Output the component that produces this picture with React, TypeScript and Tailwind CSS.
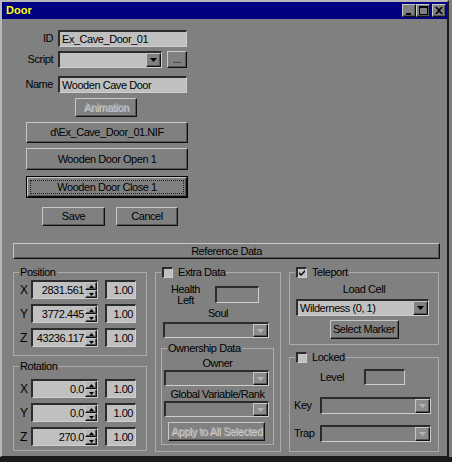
import React from 'react';

const sunken =
  'border-t-2 border-l-2 border-b border-r border-t-[#2c2c2c] border-l-[#2c2c2c] border-b-[#cfcfcf] border-r-[#cfcfcf]';
const raised =
  'border border-t-[#c8c8c8] border-l-[#c8c8c8] border-b-[#101010] border-r-[#101010] shadow-[inset_-1px_-1px_0_#555555]';
const disabledText = 'text-[#a8a8a8] [text-shadow:1px_1px_0_#d6d6d6]';

const Down = ({ c = '#000', w = 7 }: { c?: string; w?: number }) => (
  <svg width={w} height={Math.ceil(w / 2)} viewBox={`0 0 ${w} ${Math.ceil(w / 2)}`}>
    <path d={`M0 0H${w}L${w / 2} ${Math.ceil(w / 2)}Z`} fill={c} />
  </svg>
);

const Up = ({ w = 5 }: { w?: number }) => (
  <svg width={w} height={Math.ceil(w / 2)} viewBox={`0 0 ${w} ${Math.ceil(w / 2)}`}>
    <path d={`M0 ${Math.ceil(w / 2)}H${w}L${w / 2} 0Z`} fill="#000" />
  </svg>
);

const Btn = ({
  className,
  children,
  disabled,
}: {
  className: string;
  children: React.ReactNode;
  disabled?: boolean;
}) => (
  <div
    className={`${raised} bg-[#808080] flex items-center justify-center shrink-0 whitespace-nowrap ${
      disabled ? disabledText : ''
    } ${className}`}
  >
    {children}
  </div>
);

const Edit = ({ className, value, right }: { className: string; value?: string; right?: boolean }) => (
  <div
    className={`${sunken} flex items-center px-[2px] shrink-0 ${right ? 'justify-end' : ''} ${className}`}
  >
    {value}
  </div>
);

const Combo = ({ className, value, enabled }: { className: string; value?: string; enabled?: boolean }) => (
  <div
    className={`${sunken} flex items-stretch shrink-0 ${enabled ? 'bg-[#c0c0c0]' : 'bg-[#808080]'} ${className}`}
  >
    <div className="flex-1 flex items-center px-[2px] whitespace-nowrap overflow-hidden">{value}</div>
    <div
      className={`${raised} w-[15px] flex items-center justify-center ${
        enabled ? 'bg-[#808080]' : 'bg-[#8c8c8c]'
      }`}
    >
      <Down c={enabled ? '#000' : '#b4b4b4'} />
    </div>
  </div>
);

const Spin = ({ value }: { value: string }) => (
  <div className={`${sunken} bg-[#c0c0c0] w-[67px] h-full flex shrink-0`}>
    <div className="flex-1 flex items-center justify-end pr-[1px] whitespace-nowrap">{value}</div>
    <div className="flex flex-col w-[12px]">
      <div className={`${raised} flex-1 bg-[#b4b4b4] flex items-center justify-center`}>
        <Up />
      </div>
      <div className={`${raised} flex-1 bg-[#b4b4b4] flex items-center justify-center`}>
        <Down w={5} />
      </div>
    </div>
  </div>
);

const Check = ({ checked }: { checked?: boolean }) => (
  <span className={`${sunken} inline-flex w-[11px] h-[11px] bg-[#c0c0c0] items-center justify-center`}>
    {checked && (
      <svg width="7" height="7" viewBox="0 0 7 7">
        <path d="M0 2L2 4L6 0V2L2 6L0 4Z" fill="#000" />
      </svg>
    )}
  </span>
);

const Group = ({
  legend,
  className,
  children,
}: {
  legend: React.ReactNode;
  className: string;
  children: React.ReactNode;
}) => (
  <fieldset className={`border border-[#ababab] shrink-0 ${className}`}>
    <legend className="ml-[5px] px-[1px] leading-[13px]">{legend}</legend>
    {children}
  </fieldset>
);

const XyzRows = ({ values, first, gap }: { values: string[]; first: string; gap: string }) => (
  <div className={`flex flex-col ${first} ${gap}`}>
    {['X', 'Y', 'Z'].map((axis, i) => (
      <div key={axis} className="flex items-center h-[19px]">
        <span className="ml-[6px] w-[11px] text-[12px]">{axis}</span>
        <Spin value={values[i]} />
        <Edit className="ml-[7px] w-[31px] h-full bg-[#c0c0c0]" value="1.00" right />
      </div>
    ))}
  </div>
);

const TitleButton = ({ children, className = '' }: { children: React.ReactNode; className?: string }) => (
  <div className={`${raised} w-[14px] h-[13px] bg-[#808080] flex items-center justify-center ${className}`}>
    {children}
  </div>
);

export default function App() {
  return (
    <div className="w-[452px] h-[462px] bg-[#808080] flex flex-col font-['Liberation_Sans',Arial,sans-serif] text-[11px] tracking-[-0.45px] text-black overflow-hidden">
      <div className="h-[457px] w-[449px] flex flex-col border-t-2 border-l-2 border-t-[#b8b8b8] border-l-[#b8b8b8] border-r-2 border-r-[#1a1a1a] border-b border-b-[#1a1a1a]">
        {/* title bar */}
        <div className="h-[17px] bg-[#000080] flex items-center justify-between pl-[4px] pr-[1px]">
          <span className="font-bold text-[#ffff00] text-[11px] tracking-normal">Door</span>
          <div className="flex items-center">
            <TitleButton>
              <svg width="8" height="9" viewBox="0 0 8 9">
                <rect x="1" y="7" width="5" height="2" fill="#000" />
              </svg>
            </TitleButton>
            <TitleButton>
              <svg width="9" height="9" viewBox="0 0 9 9">
                <path d="M0 0H9V9H0ZM1 2V8H8V2Z" fill="#000" fillRule="evenodd" />
              </svg>
            </TitleButton>
            <TitleButton className="ml-[2px]">
              <svg width="8" height="7" viewBox="0 0 8 7">
                <path d="M0 0H2L4 2L6 0H8L5 3.5L8 7H6L4 5L2 7H0L3 3.5Z" fill="#000" />
              </svg>
            </TitleButton>
          </div>
        </div>

        {/* record fields */}
        <div className="flex items-center mt-[11px] h-[17px]">
          <span className="w-[51px] text-right">ID</span>
          <Edit className="ml-[5px] w-[129px] h-[17px] bg-[#c0c0c0]" value="Ex_Cave_Door_01" />
        </div>
        <div className="flex items-center mt-[4px] h-[17px]">
          <span className="w-[51px] text-right">Script</span>
          <Combo className="ml-[5px] w-[104px] h-[17px]" enabled />
          <Btn className="ml-[5px] w-[20px] h-[17px]">...</Btn>
        </div>
        <div className="flex items-center mt-[8px] h-[17px]">
          <span className="w-[51px] text-right">Name</span>
          <Edit className="ml-[5px] w-[129px] h-[17px] bg-[#c0c0c0]" value="Wooden Cave Door" />
        </div>
        <Btn className="mt-[5px] ml-[73px] w-[62px] h-[19px]" disabled>
          Animation
        </Btn>
        <Btn className="mt-[5px] ml-[24px] w-[162px] h-[21px]">d\Ex_Cave_Door_01.NIF</Btn>
        <Btn className="mt-[5px] ml-[24px] w-[162px] h-[22px]">Wooden Door Open 1</Btn>
        <div className="mt-[6px] ml-[24px] w-[162px] h-[22px] border border-black">
          <div className={`${raised} bg-[#808080] w-full h-full p-[2px]`}>
            <div className="w-full h-full border border-dotted border-[#202020] flex items-center justify-center">
              Wooden Door Close 1
            </div>
          </div>
        </div>
        <div className="flex mt-[9px]">
          <Btn className="ml-[40px] w-[63px] h-[19px]">Save</Btn>
          <Btn className="ml-[11px] w-[62px] h-[19px]">Cancel</Btn>
        </div>
        <Btn className="mt-[17px] ml-[11px] w-[427px] h-[16px]">Reference Data</Btn>

        {/* reference groups */}
        <div className="flex mt-[7px] ml-[11px] items-start">
          <div className="flex flex-col w-[134px]">
            <Group legend="Position" className="w-[134px] h-[90px]">
              <XyzRows values={['2831.561', '3772.445', '43236.117']} first="mt-[1px]" gap="gap-[5px]" />
            </Group>
            <Group legend="Rotation" className="w-[134px] h-[91px] mt-[4px]">
              <XyzRows values={['0.0', '0.0', '270.0']} first="mt-[6px]" gap="gap-[5px]" />
            </Group>
          </div>

          <Group
            legend={
              <span className="flex items-center gap-[5px]">
                <Check />
                Extra Data
              </span>
            }
            className="w-[126px] h-[186px] ml-[8px]"
          >
            <div className="flex items-start mt-[5px]">
              <div className="ml-[12px] w-[35px] text-center leading-[11px]">
                Health
                <br />
                Left
              </div>
              <Edit className="ml-[12px] mt-[2px] w-[44px] h-[17px] bg-[#808080]" />
            </div>
            <div className="text-center mt-[1px] leading-[13px]">Soul</div>
            <Combo className="ml-[7px] mt-[2px] w-[106px] h-[16px]" />
            <Group legend="Ownership Data" className="ml-[5px] mt-[4px] w-[113px] h-[103px]">
              <div className="text-center mt-[2px] leading-[13px]">Owner</div>
              <Combo className="ml-[2px] w-[105px] h-[16px]" />
              <div className="text-center mt-[2px] leading-[13px] whitespace-nowrap">Global Variable/Rank</div>
              <Combo className="ml-[2px] w-[105px] h-[16px]" />
              <Btn className="ml-[6px] mt-[5px] w-[97px] h-[19px]" disabled>
                Apply to All Selected
              </Btn>
            </Group>
          </Group>

          <div className="flex flex-col w-[150px] ml-[8px]">
            <Group
              legend={
                <span className="flex items-center gap-[5px]">
                  <Check checked />
                  Teleport
                </span>
              }
              className="w-[150px] h-[79px]"
            >
              <div className="text-center mt-[4px] leading-[13px]">Load Cell</div>
              <Combo className="ml-[6px] mt-[3px] w-[133px] h-[17px]" value="Wilderness (0, 1)" enabled />
              <Btn className="mx-auto mt-[4px] w-[69px] h-[19px]">Select Marker</Btn>
            </Group>
            <Group
              legend={
                <span className="flex items-center gap-[5px]">
                  <Check />
                  Locked
                </span>
              }
              className="w-[150px] h-[101px] mt-[6px]"
            >
              <div className="flex items-center mt-[5px]">
                <span className="ml-[30px] w-[44px]">Level</span>
                <Edit className="w-[41px] h-[16px] bg-[#808080]" />
              </div>
              <div className="flex items-center mt-[11px]">
                <span className="ml-[4px] w-[26px]">Key</span>
                <Combo className="w-[111px] h-[17px]" />
              </div>
              <div className="flex items-center mt-[11px]">
                <span className="ml-[4px] w-[26px]">Trap</span>
                <Combo className="w-[111px] h-[17px]" />
              </div>
            </Group>
          </div>
        </div>
      </div>
      <div className="flex-1 bg-[#1a1a1a]" />
    </div>
  );
}
